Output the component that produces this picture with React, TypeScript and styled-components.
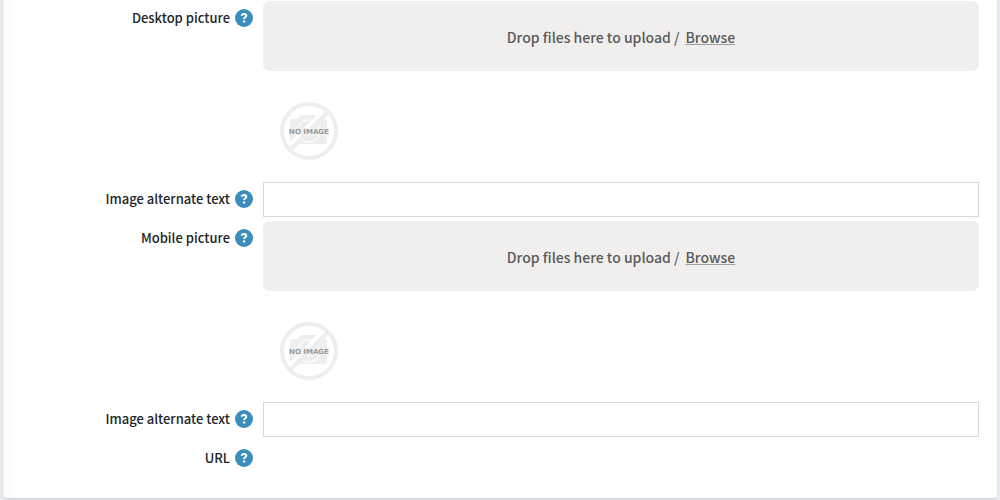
import React, { useRef } from "react";
import styled, { createGlobalStyle } from "styled-components";

const GlobalStyle = createGlobalStyle`
  *, *::before, *::after { box-sizing: border-box; }
  body {
    margin: 0;
    background: #e9edf2;
    color: #212529;
    font-family: "Noto Sans CJK SC", "Noto Sans", sans-serif;
  }
`;

const Page = styled.main`
  padding: 0 3px 2px;
`;

const Card = styled.form`
  display: flex;
  flex-direction: column;
  gap: 4px;
  padding: 1px 18px 23px 11px;
  background: linear-gradient(to right, #fafafa, #ffffff 12px);
  border-radius: 0 0 4px 4px;
  box-shadow: 0 1px 2px rgba(0, 0, 0, 0.15);
`;

const Row = styled.div`
  display: grid;
  grid-template-columns: 239px minmax(0, 1fr);
  column-gap: 10px;
`;

const LabelCell = styled.div`
  display: flex;
  align-items: center;
  justify-content: flex-end;
  gap: 5px;
  height: 34px;
`;

const Label = styled.label`
  font-size: 13px;
  font-weight: 500;
  line-height: 20px;
  white-space: nowrap;
`;

const Help = styled.button`
  display: grid;
  place-items: center;
  width: 18px;
  height: 18px;
  padding: 0;
  border: 0;
  border-radius: 50%;
  background: #3c8dbc;
  cursor: help;
`;

const DropZone = styled.div`
  display: flex;
  align-items: center;
  justify-content: center;
  gap: 6px;
  height: 70px;
  padding-top: 2px;
  border-radius: 7px;
  background: #f0efee;
  color: #5a5a5a;
  font-size: 14px;
  font-weight: 500;
  line-height: 22px;
  white-space: nowrap;
`;

const Browse = styled.button`
  padding: 0;
  border: 0;
  background: none;
  color: inherit;
  font: inherit;
  text-decoration: underline;
  text-decoration-color: #a0a0a0;
  cursor: pointer;
`;

const Preview = styled.div`
  display: flex;
  align-items: flex-start;
  height: 107px;
  padding: 31px 17px 0;
`;

const TextInput = styled.input`
  width: 100%;
  height: 35px;
  padding: 6px 12px;
  border: 1px solid #d5d9dd;
  border-radius: 0;
  background: #ffffff;
  color: inherit;
  font: inherit;
  font-size: 14px;
`;

function FieldLabel({ id, text }: { id: string; text: string }) {
  return (
    <LabelCell>
      <Label htmlFor={id}>{text}</Label>
      <Help type="button" aria-label={`Help: ${text}`}>
        <svg width="18" height="18" viewBox="0 0 18 18" fill="none">
          <path
            d="M6.4 6.6C6.9 5.4 7.8 5 9 5c1.5 0 2.3.7 2.3 1.8 0 1.5-2.2 1.4-2.2 3.2"
            stroke="#fff"
            strokeWidth="1.9"
          />
          <circle cx="9.1" cy="12.4" r="1.2" fill="#fff" />
        </svg>
      </Help>
    </LabelCell>
  );
}

function NoImage() {
  return (
    <svg width="58" height="58" viewBox="0 0 58 58" role="img" aria-label="No image">
      <path
        d="M13 17h3l2-1 3-3h15l3 4h5q3 0 3 3v19q0 3-3 3H13q-3 0-3-3V20q0-3 3-3z"
        fill="#eeeeee"
      />
      <circle cx="29" cy="29" r="11" fill="#ececec" stroke="#f8f8f8" strokeWidth="2" />
      <circle cx="29" cy="29" r="6" fill="#f3f3f3" />
      <path d="M8 46 46 8" stroke="#fff" strokeWidth="6" />
      <path d="M10 48 48 10" stroke="#eeeeee" strokeWidth="4" />
      <circle cx="29" cy="29" r="27" fill="none" stroke="#eeeeee" strokeWidth="4" />
      <rect x="9" y="26" width="40" height="7" fill="#f1f1f1" />
      <text
        x="29"
        y="32"
        textAnchor="middle"
        fontFamily="DejaVu Sans, sans-serif"
        fontSize="7"
        fontWeight="700"
        fill="#999999"
      >
        NO IMAGE
      </text>
    </svg>
  );
}

function PictureField({ id, text }: { id: string; text: string }) {
  const picker = useRef<HTMLInputElement>(null);
  return (
    <Row>
      <FieldLabel id={id} text={text} />
      <div>
        <DropZone>
          <span>Drop files here to upload /</span>
          <Browse type="button" onClick={() => picker.current?.click()}>
            Browse
          </Browse>
          <input ref={picker} id={id} type="file" accept="image/*" hidden />
        </DropZone>
        <Preview>
          <NoImage />
        </Preview>
      </div>
    </Row>
  );
}

function TextField({ id, text }: { id: string; text: string }) {
  return (
    <Row>
      <FieldLabel id={id} text={text} />
      <TextInput id={id} type="text" />
    </Row>
  );
}

export default function App() {
  return (
    <>
      <GlobalStyle />
      <Page>
        <Card>
          <PictureField id="desktop-picture" text="Desktop picture" />
          <TextField id="desktop-alt" text="Image alternate text" />
          <PictureField id="mobile-picture" text="Mobile picture" />
          <TextField id="mobile-alt" text="Image alternate text" />
          <Row>
            <FieldLabel id="url" text="URL" />
          </Row>
        </Card>
      </Page>
    </>
  );
}
